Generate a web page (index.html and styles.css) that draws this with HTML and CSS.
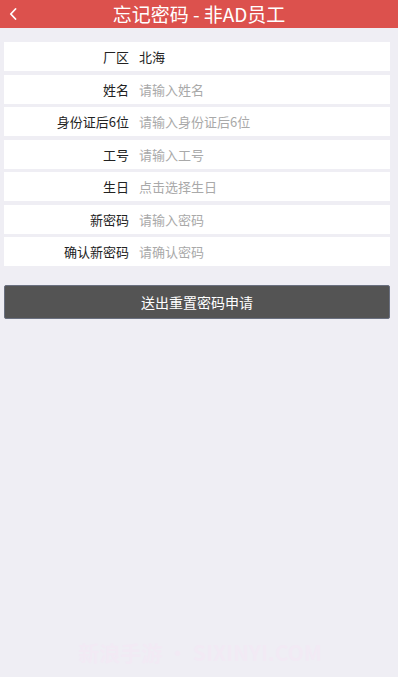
FILE: index.html
```html
<!DOCTYPE html>
<html lang="zh">
<head>
<meta charset="utf-8">
<title>忘记密码 - 非AD员工</title>
<link rel="stylesheet" href="styles.css">
</head>
<body>
<div class="page">
  <header class="topbar">
    <span class="back">
      <svg width="8" height="12" viewBox="0 0 8 12"><path d="M6.5 1 L1.8 6 L6.5 11" fill="none" stroke="#fff" stroke-width="1.8" stroke-linecap="round" stroke-linejoin="round"/></svg>
    </span>
    <h1 class="title">忘记密码 - 非AD员工</h1>
  </header>
  <main class="form">
    <div class="row"><span class="label">厂区</span><span class="value">北海</span></div>
    <div class="row"><span class="label">姓名</span><span class="value ph">请输入姓名</span></div>
    <div class="row"><span class="label">身份证后6位</span><span class="value ph">请输入身份证后6位</span></div>
    <div class="row"><span class="label">工号</span><span class="value ph">请输入工号</span></div>
    <div class="row"><span class="label">生日</span><span class="value ph">点击选择生日</span></div>
    <div class="row"><span class="label">新密码</span><span class="value ph">请输入密码</span></div>
    <div class="row"><span class="label">确认新密码</span><span class="value ph">请确认密码</span></div>
    <button class="submit">送出重置密码申请</button>
  </main>
  <div class="watermark">新浪手游 • SIXINYI.COM</div>
</div>
</body>
</html>
```
FILE: styles.css
```css
* { box-sizing: border-box; }
html, body {
  margin: 0;
  padding: 0;
  background: #efeef4;
  font-family: "Noto Sans CJK SC", "Noto Sans", sans-serif;
}
.page {
  width: 398px;
  height: 677px;
  display: flex;
  flex-direction: column;
}
.topbar {
  height: 28px;
  background: #dc514d;
  display: flex;
  align-items: center;
  justify-content: center;
  position: relative;
}
.back {
  position: absolute;
  left: 9px;
  top: 8px;
  display: flex;
}
.title {
  margin: 0;
  color: #fff;
  font-size: 19px;
  font-weight: 400;
  line-height: 28px;
}
.form {
  padding: 14px 8px 0 4px;
  display: flex;
  flex-direction: column;
  gap: 3.5px;
}
.row {
  height: 29px;
  background: #fff;
  display: flex;
  align-items: center;
  font-size: 13px;
}
.label {
  width: 125px;
  text-align: right;
  color: #222;
}
.value {
  margin-left: 10px;
  color: #222;
}
.value.ph {
  color: #a9a9a9;
}
.submit {
  margin-top: 15.5px;
  height: 34px;
  border: 1px solid #6a7080;
  border-radius: 2px;
  background: #545454;
  color: #fff;
  font-family: "Noto Sans CJK SC", "Noto Sans", sans-serif;
  font-size: 14px;
  padding: 0;
}
.watermark {
  margin-top: auto;
  margin-bottom: 10px;
  align-self: center;
  margin-left: 2px;
  color: #f2eaf4;
  font-size: 21px;
  font-weight: 700;
  font-family: "Noto Sans CJK SC", "Liberation Sans", sans-serif;
}
```
